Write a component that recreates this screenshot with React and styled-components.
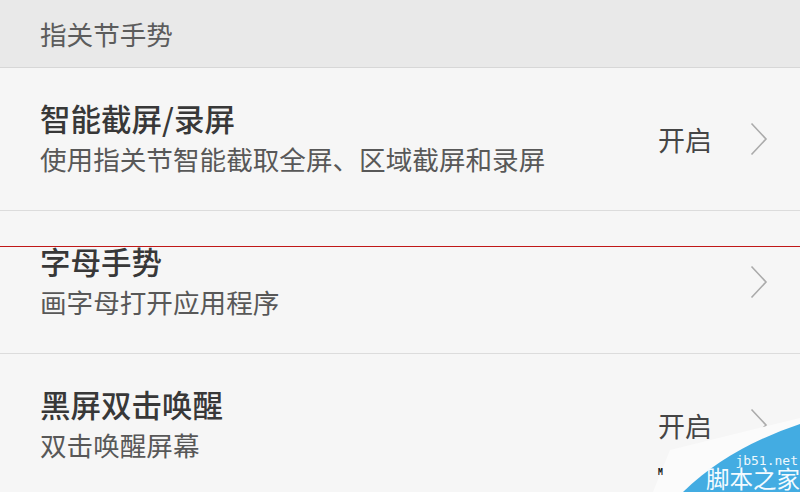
import React from 'react'
import styled, { createGlobalStyle } from 'styled-components'

const GlobalStyle = createGlobalStyle`
  html, body {
    margin: 0;
    padding: 0;
    background: #f6f6f6;
    overflow: hidden;
  }
  * {
    box-sizing: border-box;
  }
`

const Screen = styled.div`
  position: relative;
  width: 800px;
  height: 492px;
  overflow: hidden;
  background: #f6f6f6;
  font-family: 'Noto Sans CJK SC', 'Noto Sans', sans-serif;
`

const SectionHeader = styled.div`
  display: flex;
  align-items: center;
  height: 68px;
  padding-left: 40px;
  background: #e9e9e9;
  border-bottom: 1px solid #d7d7d7;
  color: #5c5c5c;
  font-size: 26.6px;
`

const Row = styled.div`
  position: relative;
  display: flex;
  align-items: center;
  height: 143px;
  padding: 0 32px 0 40px;
  border-bottom: 1px solid #dcdcdc;
`

const TextBlock = styled.div`
  flex: 1;
  display: flex;
  flex-direction: column;
  margin-top: -3px;
`

const Title = styled.div`
  color: #383838;
  font-size: 30.5px;
  font-weight: 500;
  line-height: 42px;
`

const Subtitle = styled.div`
  color: #585858;
  font-size: 26.6px;
  line-height: 40px;
`

const Value = styled.span`
  color: #454545;
  font-size: 27px;
  margin-right: 38px;
`

const Chevron = styled.svg`
  width: 18px;
  height: 34px;
  flex-shrink: 0;
`

const RedMark = styled.div`
  position: absolute;
  left: 0;
  right: 0;
  top: 35px;
  height: 1px;
  background: #c01818;
`

const Watermark = styled.div`
  position: absolute;
  right: 0;
  bottom: 0;
  width: 150px;
  height: 75px;
`

const WatermarkShape = styled.svg`
  position: absolute;
  left: 0;
  top: 0;
  width: 150px;
  height: 75px;
`

const Domain = styled.span`
  position: absolute;
  right: 2px;
  top: 37px;
  color: #eef8fd;
  font-family: 'DejaVu Sans Mono', 'Liberation Mono', monospace;
  font-size: 13px;
  line-height: 13px;
`

const SiteName = styled.span`
  position: absolute;
  right: 0;
  top: 47px;
  color: #f4fbff;
  font-size: 23.5px;
  line-height: 28px;
`

const Stray = styled.span`
  position: absolute;
  left: 8px;
  top: 52px;
  color: #111;
  font-family: 'DejaVu Sans Mono', monospace;
  font-size: 8px;
  line-height: 8px;
  font-weight: bold;
`

const rows = [
  { title: '智能截屏/录屏', desc: '使用指关节智能截取全屏、区域截屏和录屏', value: '开启' },
  { title: '字母手势', desc: '画字母打开应用程序', marked: true },
  { title: '黑屏双击唤醒', desc: '双击唤醒屏幕', value: '开启' }
]

const Arrow = () => (
  <Chevron viewBox='0 0 18 34'>
    <polyline points='1.5,1.5 16,17 1.5,32.5' fill='none' stroke='#ababab' strokeWidth='1.6' />
  </Chevron>
)

export default function App () {
  return (
    <Screen>
      <GlobalStyle />
      <SectionHeader>指关节手势</SectionHeader>
      {rows.map((r, i) =>
        <Row key={i}>
          {r.marked && <RedMark />}
          <TextBlock>
            <Title>{r.title}</Title>
            <Subtitle>{r.desc}</Subtitle>
          </TextBlock>
          {r.value && <Value>{r.value}</Value>}
          <Arrow />
        </Row>
      )}
      <Watermark>
        <WatermarkShape viewBox='0 0 150 75'>
          <path d='M3,75 L20,33 L150,1 L150,75 Z' fill='#fbfbfb' />
          <path d='M33,75 Q78,31 150,7 L150,75 Z' fill='#43ace2' />
        </WatermarkShape>
        <Stray>M</Stray>
        <Domain>jb51.net</Domain>
        <SiteName>脚本之家</SiteName>
      </Watermark>
    </Screen>
  )
}
